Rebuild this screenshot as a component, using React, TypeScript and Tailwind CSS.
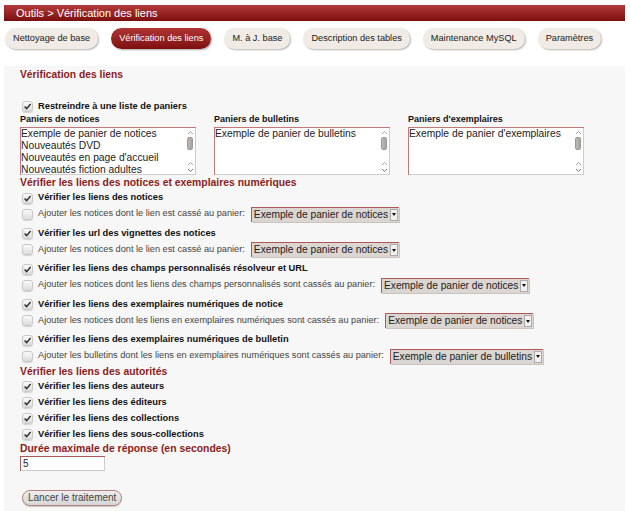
import React from 'react';

// Fake checkbox drawn with CSS so it looks like the old browser theme
function Check( { checked }: { checked?: boolean } ) {
  return (
    <span className="inline-flex w-[11px] h-[11px] shrink-0 items-center justify-center rounded-[3px] border border-[#c8c8c8] bg-gradient-to-b from-[#fbfbfb] to-[#dcdcdc] shadow-[0_1px_1px_rgba(0,0,0,0.15)]">
      {checked && (
        <svg width="9" height="9" viewBox="0 0 9 9">
          <path d="M1.6 4.6 L3.6 6.6 L7.6 2" fill="none" stroke="#2a2a2a" strokeWidth="1.4" />
        </svg>
      )}
    </span>
  );
}

// Drop-down with the little arrow button on the right
function Select( { label }: { label: string } ) {
  return (
    <span className="ml-[1px] inline-flex h-[15px] items-stretch border-t border-l border-[#b05858] bg-[#dcd6d2] shadow-[1px_1px_0_#c9c4c0]">
      <span className="px-[2px] text-[10.2px] leading-[14px] text-[#222]">{label}</span>
      <span className="my-[1px] mr-[1px] flex w-[8px] items-center justify-center border border-[#aaa] bg-[#f2f0ee]">
        <span className="block h-0 w-0 border-x-[2px] border-t-[3px] border-x-transparent border-t-[#111]" />
      </span>
    </span>
  );
}

// Multi-line list box with the fake scroll bar
function ListBox( { items }: { items: string[] } ) {
  return (
    <div className="flex h-[48px] w-[176px] border-t border-l border-[#c47878] bg-white shadow-[inset_-1px_-1px_0_#d0cccc]">
      <div className="flex-1 overflow-hidden text-[10.3px] leading-[12px] text-[#222]">
        {items.map( ( it ) => (
          <div key={it} className="whitespace-nowrap">{it}</div>
        ) )}
      </div>
      <div className="flex w-[11px] flex-col items-center pr-[1px] text-[#888]">
        <svg width="7" height="6" viewBox="0 0 7 6" className="mt-[2px]"><path d="M1 4 L3.5 1.5 L6 4" fill="none" stroke="#999" strokeWidth="0.9" /></svg>
        <span className="mt-[1px] h-[13px] w-[6px] rounded-[2px] border border-[#999] bg-gradient-to-r from-[#bdb8b4] to-[#a9a39f]" />
        <div className="flex-1" />
        <svg width="7" height="6" viewBox="0 0 7 6"><path d="M1 4 L3.5 1.5 L6 4" fill="none" stroke="#999" strokeWidth="0.9" /></svg>
        <svg width="7" height="6" viewBox="0 0 7 6" className="mb-[2px]"><path d="M1 2 L3.5 4.5 L6 2" fill="none" stroke="#666" strokeWidth="0.9" /></svg>
      </div>
    </div>
  );
}

function CheckRow( { label }: { label: string } ) {
  return (
    <div className="flex h-[16px] items-center gap-[5px] pl-[2px]">
      <Check checked />
      <span className="text-[9.3px] font-bold text-[#111]">{label}</span>
    </div>
  );
}

function AddRow( { label, basket }: { label: string, basket: string } ) {
  return (
    <div className="flex h-[16px] items-center gap-[5px] pl-[2px]">
      <Check />
      <span className="text-[9.2px] text-[#444]">{label}</span>
      <Select label={basket} />
    </div>
  );
}

const tabs = [ 'Nettoyage de base', 'Vérification des liens', 'M. à J. base', 'Description des tables', 'Maintenance MySQL', 'Paramètres' ];

const groups = [
  { check: 'Vérifier les liens des notices', add: 'Ajouter les notices dont le lien est cassé au panier:', basket: 'Exemple de panier de notices' },
  { check: 'Vérifier les url des vignettes des notices', add: 'Ajouter les notices dont le lien est cassé au panier:', basket: 'Exemple de panier de notices' },
  { check: 'Vérifier les liens des champs personnalisés résolveur et URL', add: 'Ajouter les notices dont les liens des champs personnalisés sont cassés au panier:', basket: 'Exemple de panier de notices' },
  { check: 'Vérifier les liens des exemplaires numériques de notice', add: 'Ajouter les notices dont les liens en exemplaires numériques sont cassés au panier:', basket: 'Exemple de panier de notices' },
  { check: 'Vérifier les liens des exemplaires numériques de bulletin', add: 'Ajouter les bulletins dont les liens en exemplaires numériques sont cassés au panier:', basket: 'Exemple de panier de bulletins' },
];

const authorities = [ 'Vérifier les liens des auteurs', 'Vérifier les liens des éditeurs', 'Vérifier les liens des collections', 'Vérifier les liens des sous-collections' ];

export default function App() {
  return (
    <div className="min-h-[511px] bg-white pl-[4px] pr-[5px] pt-[5px] font-['Liberation_Sans',Arial,sans-serif]">
      {/* Title bar */}
      <div className="flex h-[16px] items-center bg-gradient-to-b from-[#b33b3b] to-[#7c0d0d] pl-[12px] text-[11px] text-white">
        Outils &gt; Vérification des liens
      </div>

      {/* Tabs */}
      <div className="mt-[7px] flex h-[21px] gap-[13px] pl-[1px]">
        {tabs.map( ( t ) => (
          <div
            key={t}
            className={t === 'Vérification des liens'
              ? 'flex items-center rounded-full bg-gradient-to-b from-[#b03434] to-[#7d0f0f] px-[8px] text-[9.2px] text-white shadow-[1px_1px_2px_rgba(0,0,0,0.35)]'
              : 'flex items-center rounded-full bg-[#f0ebe4] px-[8px] text-[9.2px] text-[#222] shadow-[1px_1px_2px_rgba(0,0,0,0.3)]'}
          >
            {t}
          </div>
        ) )}
      </div>

      {/* Main panel */}
      <div className="mt-[17px] min-h-[445px] bg-[#f7f7f7] pl-[16px] pt-[3px]">
        <div className="h-[12px] text-[10.3px] font-bold leading-[12px] text-[#8b1c1c]">Vérification des liens</div>

        <div className="mt-[19px] flex h-[13px] items-center gap-[5px] pl-[2px]">
          <Check checked />
          <span className="text-[9.3px] font-bold text-[#111]">Restreindre à une liste de paniers</span>
        </div>

        <div className="flex gap-[18px]">
          {[
            { label: 'Paniers de notices', items: [ 'Exemple de panier de notices', 'Nouveautés DVD', 'Nouveautés en page d\'accueil', 'Nouveautés fiction adultes' ] },
            { label: 'Paniers de bulletins', items: [ 'Exemple de panier de bulletins' ] },
            { label: 'Paniers d\'exemplaires', items: [ 'Exemple de panier d\'exemplaires' ] },
          ].map( ( b ) => (
            <div key={b.label}>
              <div className="h-[12px] text-[9px] font-bold leading-[12px] text-[#111]">{b.label}</div>
              <div className="mt-[2px]"><ListBox items={b.items} /></div>
            </div>
          ) )}
        </div>

        <div className="mt-[1px] flex h-[14px] items-center text-[10.4px] font-bold text-[#8b1c1c]">Vérifier les liens des notices et exemplaires numériques</div>

        {groups.map( ( g ) => (
          <div key={g.check} className="mb-[3.5px]">
            <CheckRow label={g.check} />
            <AddRow label={g.add} basket={g.basket} />
          </div>
        ) )}

        <div className="-mt-[3px] flex h-[14px] items-center text-[10.4px] font-bold text-[#8b1c1c]">Vérifier les liens des autorités</div>
        {authorities.map( ( a ) => (
          <CheckRow key={a} label={a} />
        ) )}

        <div className="flex h-[12px] items-center text-[10.4px] font-bold text-[#8b1c1c]">Durée maximale de réponse (en secondes)</div>
        <div className="mt-[1px] flex h-[15px] w-[85px] items-center border-t border-l border-[#b05858] bg-white pl-[2px] text-[10px] text-[#222] shadow-[inset_-1px_-1px_0_#ccc]">5</div>

        <button className="mt-[19px] ml-[2px] h-[16px] rounded-full border border-[#b88080] bg-gradient-to-b from-[#eeeeee] to-[#d6d6d6] px-[5px] text-[10px] leading-[13px] text-[#444] shadow-[0_1px_1px_rgba(0,0,0,0.2)]">
          Lancer le traitement
        </button>
      </div>
    </div>
  );
}
